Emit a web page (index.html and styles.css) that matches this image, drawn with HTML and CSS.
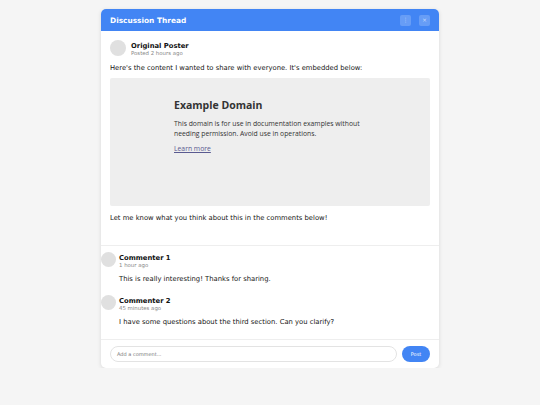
FILE: index.html
```html
<!DOCTYPE html>
<html>
<head>
<meta charset="utf-8">
<link rel="stylesheet" href="styles.css">
</head>
<body>
<div class="card">
  <div class="header">
    <div class="title">Discussion Thread</div>
    <div class="actions">
      <span class="hbtn">⋮</span>
      <span class="hbtn">×</span>
    </div>
  </div>
  <div class="post">
    <div class="author big">
      <div class="avatar"></div>
      <div class="meta">
        <div class="name">Original Poster</div>
        <div class="time">Posted 2 hours ago</div>
      </div>
    </div>
    <p class="text intro">Here's the content I wanted to share with everyone. It's embedded below:</p>
    <div class="embed">
      <div class="embed-inner">
        <h1>Example Domain</h1>
        <p>This domain is for use in documentation examples without needing permission. Avoid use in operations.</p>
        <p><a href="#">Learn more</a></p>
      </div>
    </div>
    <p class="text">Let me know what you think about this in the comments below!</p>
  </div>
  <div class="comments">
    <div class="comment">
      <div class="author small">
        <div class="avatar"></div>
        <div class="meta">
          <div class="name">Commenter 1</div>
          <div class="time">1 hour ago</div>
        </div>
      </div>
      <p class="text ctext">This is really interesting! Thanks for sharing.</p>
    </div>
    <div class="comment">
      <div class="author small">
        <div class="avatar"></div>
        <div class="meta">
          <div class="name">Commenter 2</div>
          <div class="time">45 minutes ago</div>
        </div>
      </div>
      <p class="text ctext">I have some questions about the third section. Can you clarify?</p>
    </div>
  </div>
  <div class="reply">
    <div class="input">Add a comment...</div>
    <div class="post-btn">Post</div>
  </div>
</div>
</body>
</html>
```
FILE: styles.css
```css
* { box-sizing: border-box; }
body {
  margin: 0;
  background: #f5f5f5;
  font-family: "DejaVu Sans", Verdana, sans-serif;
  color: #151515;
  padding-top: 9px;
}
.card {
  width: 338px;
  margin: 0 auto;
  background: #fff;
  border-radius: 5px;
  overflow: hidden;
  box-shadow: 0 1px 4px rgba(0,0,0,0.12);
}
.header {
  height: 22px;
  background: #4285f4;
  display: flex;
  align-items: center;
  justify-content: space-between;
  padding: 0 9px;
}
.title {
  color: #fff;
  font-weight: bold;
  font-size: 7.4px;
}
.actions { display: flex; gap: 8px; }
.hbtn {
  width: 11px;
  height: 11px;
  border-radius: 2px;
  background: rgba(255,255,255,0.2);
  color: rgba(255,255,255,0.6);
  font-size: 6px;
  display: flex;
  align-items: center;
  justify-content: center;
  line-height: 1;
}
.post { padding: 9px 9px 14px; border-bottom: 1px solid #eee; }
.author { display: flex; align-items: flex-start; gap: 3px; height: 15px; }
.author.big { gap: 5px; height: 16px; }
.meta { padding-top: 1.5px; }
.avatar {
  width: 15px; height: 15px; border-radius: 50%;
  background: #e0e0e0;
  flex: none;
}
.author.big .avatar { width: 16px; height: 16px; }
.name { font-weight: bold; font-size: 6.8px; color: #111; line-height: 8px; }
.time { font-size: 5.4px; color: #888; line-height: 7px; }
.text { font-size: 6.8px; margin: 8px 0; line-height: 9px; }
.text.intro { margin-bottom: 5px; }
.embed {
  background: #eee;
  height: 128px;
  border-radius: 2px;
  font-family: "Open Sans", "Noto Sans", sans-serif;
  color: #333;
  padding-top: 20px;
}
.embed-inner { width: 192px; margin: 0 auto; }
.embed h1 { font-size: 10.5px; margin: 0 0 7px; color: #333; }
.embed p { font-size: 6.8px; margin: 0 0 6px; line-height: 9.5px; }
.embed a { color: #5a5a90; }
.comments { padding: 6px 9px 0 0; border-bottom: 1px solid #eee; }
.comment { margin-bottom: 11px; }
.comment:last-child { margin-bottom: 12px; }
.ctext { margin: 8px 0 0 18px; }
.reply { display: flex; gap: 5px; padding: 6px 9px; align-items: center; }
.input {
  flex: 1;
  height: 16px;
  border: 1px solid #e3e3e3;
  border-radius: 8px;
  font-size: 5px;
  color: #777;
  padding-left: 6px;
  display: flex; align-items: center;
}
.post-btn {
  width: 28px; height: 16px;
  border-radius: 8px;
  background: #4285f4;
  color: #fff;
  font-size: 5px;
  display: flex; align-items: center; justify-content: center;
}
```
